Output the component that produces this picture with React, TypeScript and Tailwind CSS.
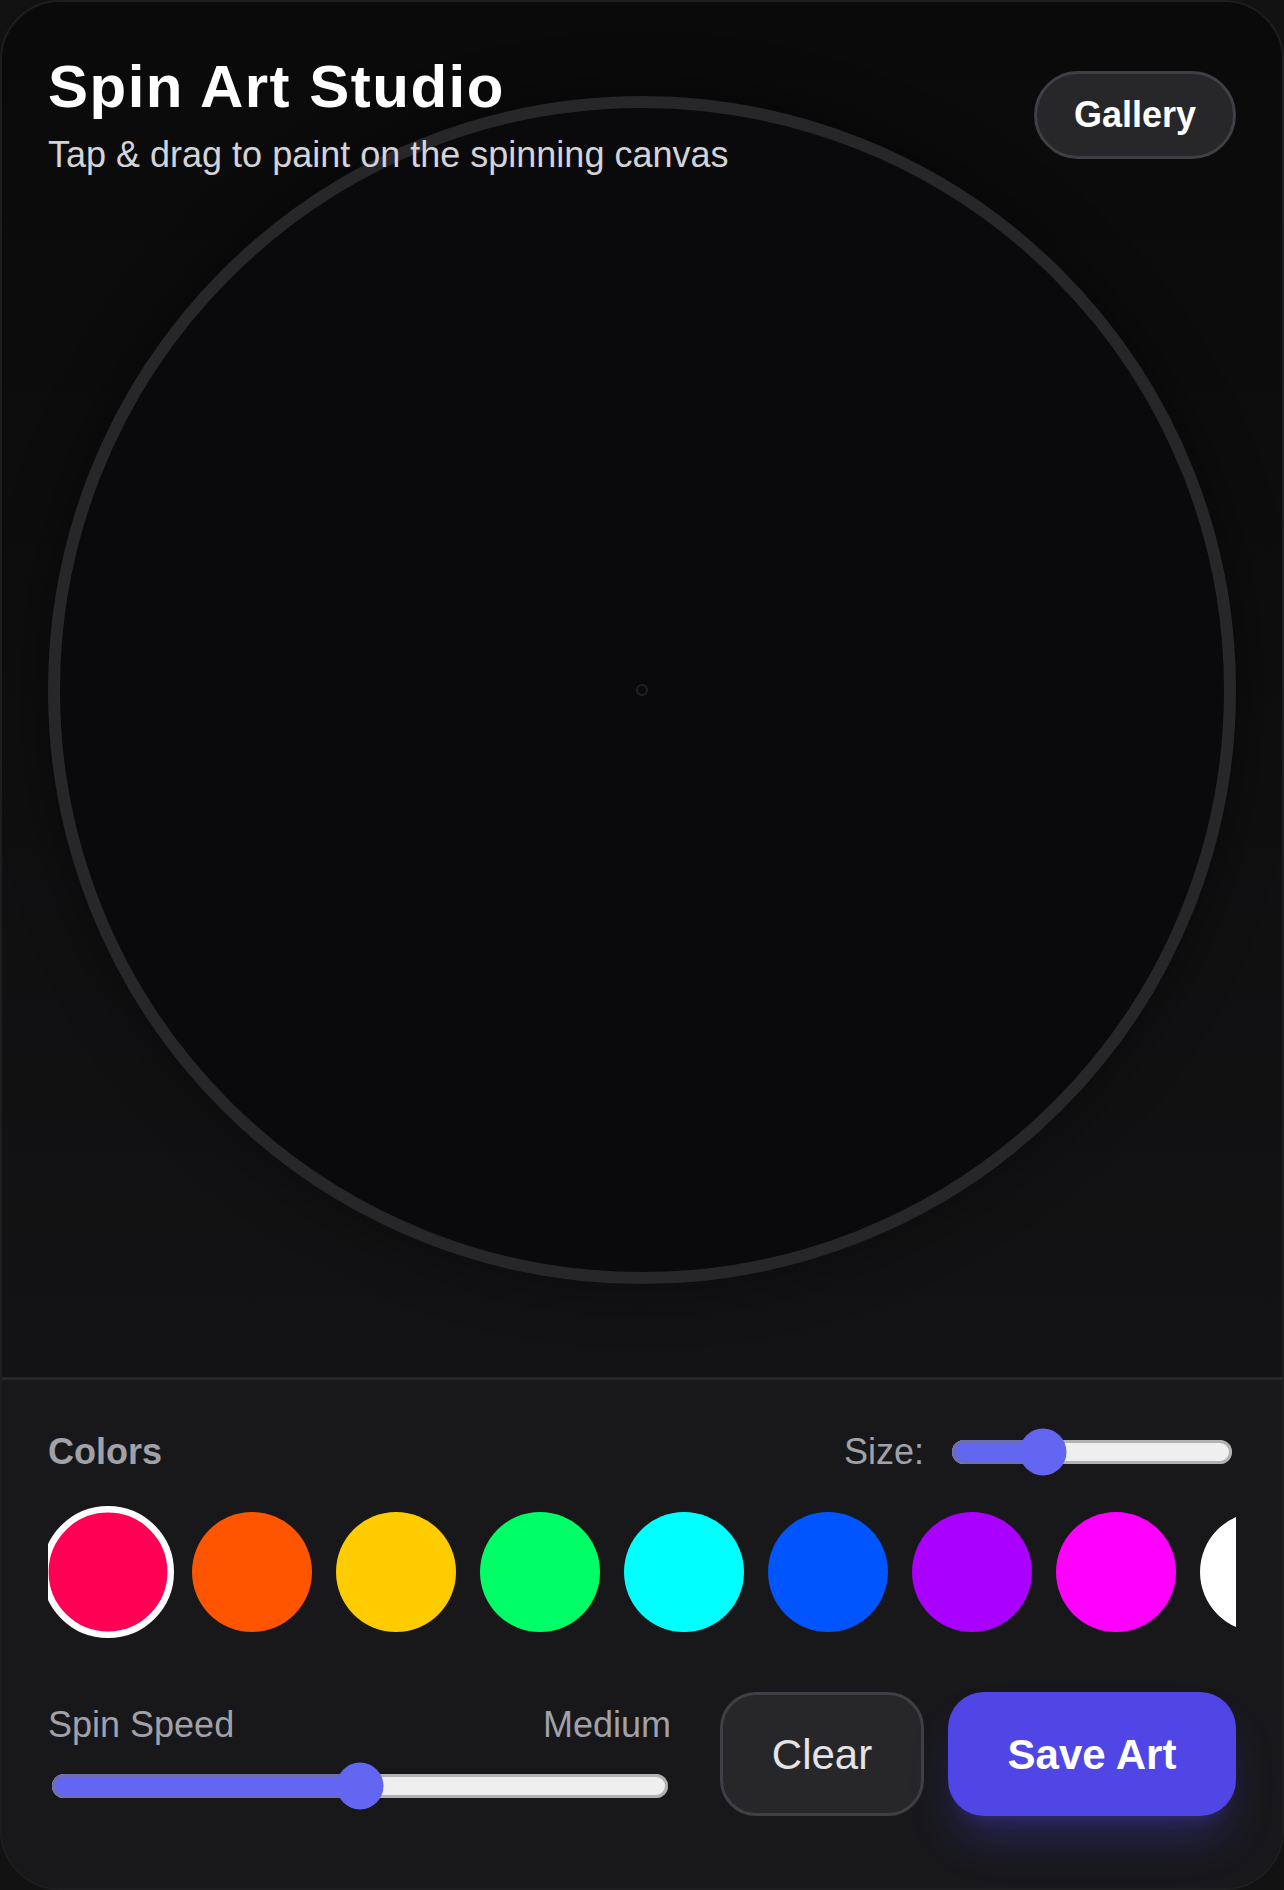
import React, { useState } from "react";

const COLORS = [
  "#ff0055",
  "#ff5500",
  "#ffcc00",
  "#00ff66",
  "#00ffff",
  "#0055ff",
  "#aa00ff",
  "#ff00ff",
  "#ffffff",
  "#000000",
];

export default function App() {
  const [selected, setSelected] = useState(0);
  const [size, setSize] = useState(29);
  const [speed, setSpeed] = useState(50);

  return (
    <div className="w-[1284px] h-[1890px] bg-[#121212] font-['Liberation_Sans',Arial,sans-serif]">
      <div className="h-full rounded-[60px] border-2 border-[#1e1e20] overflow-hidden flex flex-col">
        {/* Canvas area */}
        <div className="relative flex-1 flex items-center justify-center px-[46px] bg-linear-to-b from-[#0a0a0a] to-[#131315]">
          <div className="w-[1188px] h-[1188px] shrink-0 rounded-full border-[12px] border-[#27272a] bg-[#0a0a0c] shadow-[0_0_60px_rgba(0,0,0,0.45)] flex items-center justify-center">
            <div className="w-[12px] h-[12px] rounded-full border-2 border-[#222225]" />
          </div>

          <div className="absolute top-0 inset-x-0 px-[46px] pt-[46px] flex items-center justify-between">
            <div>
              <h1 className="text-[60px] leading-[78px] font-bold tracking-wide text-white">
                Spin Art Studio
              </h1>
              <p className="mt-[2px] text-[36px] leading-[54px] text-[#d4d4d8]">
                Tap &amp; drag to paint on the spinning canvas
              </p>
            </div>
            <button className="h-[88px] px-[37px] rounded-full border-[3px] border-[#3f3f46] bg-[#27272a] text-[36px] font-bold text-white">
              Gallery
            </button>
          </div>
        </div>

        {/* Controls */}
        <div className="border-t-[3px] border-[#27272a] bg-[#18181b] px-[46px] pt-[48px] pb-[72px]">
          <div className="h-[48px] flex items-center justify-between">
            <span className="text-[36px] font-bold text-[#a1a1aa]">Colors</span>
            <div className="flex items-center gap-[27px]">
              <span className="text-[36px] text-[#a1a1aa]">Size:</span>
              <input
                type="range"
                min={0}
                max={100}
                value={size}
                onChange={(e) => setSize(Number(e.target.value))}
                className="[zoom:3] w-[94px] mr-[1px] accent-[#6366f1]"
              />
            </div>
          </div>

          <div className="mt-[24px] py-[12px] flex gap-[24px] overflow-x-auto [scrollbar-width:none]">
            {COLORS.map((c, i) => (
              <button
                key={c}
                onClick={() => setSelected(i)}
                style={{ backgroundColor: c }}
                className={
                  i === selected
                    ? "w-[120px] h-[120px] shrink-0 rounded-full border-[6px] border-white scale-110"
                    : "w-[120px] h-[120px] shrink-0 rounded-full border-[6px] border-transparent"
                }
              />
            ))}
          </div>

          <div className="mt-[48px] flex items-center gap-[49px]">
            <div className="flex-1 flex flex-col gap-[10px]">
              <div className="flex items-center justify-between text-[36px] leading-[54px] text-[#a1a1aa]">
                <span>Spin Speed</span>
                <span>Medium</span>
              </div>
              <input
                type="range"
                min={0}
                max={100}
                value={speed}
                onChange={(e) => setSpeed(Number(e.target.value))}
                className="[zoom:3] w-[206px] ml-[1px] accent-[#6366f1]"
              />
            </div>
            <div className="flex items-center gap-[24px]">
              <button className="h-[124px] w-[204px] rounded-[36px] border-[3px] border-[#3f3f46] bg-[#27272a] text-[42px] text-[#e4e4e7]">
                Clear
              </button>
              <button className="h-[124px] w-[288px] rounded-[36px] bg-[#4f46e5] text-[42px] font-bold text-white shadow-[0_30px_45px_-9px_rgba(79,70,229,0.3),0_12px_18px_-12px_rgba(79,70,229,0.3)]">
                Save Art
              </button>
            </div>
          </div>
        </div>
      </div>
    </div>
  );
}
